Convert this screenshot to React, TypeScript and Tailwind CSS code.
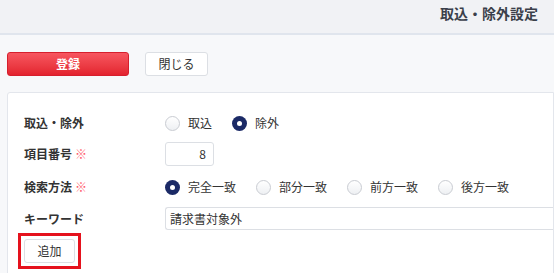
import React from "react";

function Radio({ checked, label }: { checked?: boolean; label: string }) {
  return (
    <div className="flex items-center mr-[20px]">
      {checked ? (
        <span className="w-[15px] h-[15px] rounded-full bg-[#1b2a66] flex items-center justify-center">
          <span className="w-[5px] h-[5px] rounded-full bg-white" />
        </span>
      ) : (
        <span className="w-[15px] h-[15px] rounded-full border border-[#c9ccd2] bg-gradient-to-b from-white to-[#eef0f3]" />
      )}
      <span className="ml-[8px] text-[12px] text-[#333]">{label}</span>
    </div>
  );
}

function Label({ text, req }: { text: string; req?: boolean }) {
  return (
    <div className="w-[141px] shrink-0 flex items-center text-[12px] font-bold text-[#333]">
      <span>{text}</span>
      {req && <span className="ml-[3px] text-[#ff5a6a] font-bold">※</span>}
    </div>
  );
}

export default function App() {
  return (
    <div
      className="w-[554px] h-[273px] overflow-hidden bg-[#f7f8fa]"
      style={{ fontFamily: '"Noto Sans CJK JP", "Noto Sans", sans-serif' }}
    >
      <div className="h-[35px] bg-[#f1f2f5] border-b-2 border-[#e0e5ed] flex items-center justify-end pr-[16px] pb-[8px]">
        <span className="text-[14px] font-bold text-[#3a3f4a] leading-none">取込・除外設定</span>
      </div>
      <div className="pl-[7px] pt-[17px] flex items-center">
        <button className="w-[122px] h-[24px] rounded-[3px] border border-[#d61f2d] bg-gradient-to-b from-[#f7555f] to-[#e3222e] text-white text-[12px] font-bold leading-none">
          登録
        </button>
        <button className="ml-[16px] w-[63px] h-[24px] rounded-[3px] border border-[#dcdfe4] bg-white text-[12px] text-[#333] leading-none">
          閉じる
        </button>
      </div>
      <div className="ml-[7px] mt-[16px] bg-white border border-[#e3e6ec] rounded-tl-[3px] pl-[16px] pt-[19px] h-[200px]">
        <div className="flex h-[22px] items-center">
          <Label text="取込・除外" />
          <Radio label="取込" />
          <Radio checked label="除外" />
        </div>
        <div className="flex h-[24px] items-center mt-[8px]">
          <Label text="項目番号" req />
          <div className="w-[49px] h-[24px] border border-[#dcdfe4] rounded-[3px] flex items-center justify-end pr-[7px] text-[12px] text-[#333]">
            8
          </div>
        </div>
        <div className="flex h-[22px] items-center mt-[10px]">
          <Label text="検索方法" req />
          <Radio checked label="完全一致" />
          <Radio label="部分一致" />
          <Radio label="前方一致" />
          <Radio label="後方一致" />
        </div>
        <div className="flex h-[23px] items-center mt-[9px]">
          <Label text="キーワード" />
          <div className="flex-1 h-[23px] border border-[#dcdfe4] border-r-0 rounded-l-[3px] flex items-center pl-[4px] text-[12px] text-[#333]">
            請求書対象外
          </div>
        </div>
        <div className="mt-[3px] ml-[-6px] w-[63px] h-[36px] border-[3px] border-[#e5121d] flex items-center justify-center">
          <button className="w-[51px] h-[24px] rounded-[3px] border border-[#dcdfe4] bg-white text-[12px] text-[#333] leading-none">
            追加
          </button>
        </div>
      </div>
    </div>
  );
}
